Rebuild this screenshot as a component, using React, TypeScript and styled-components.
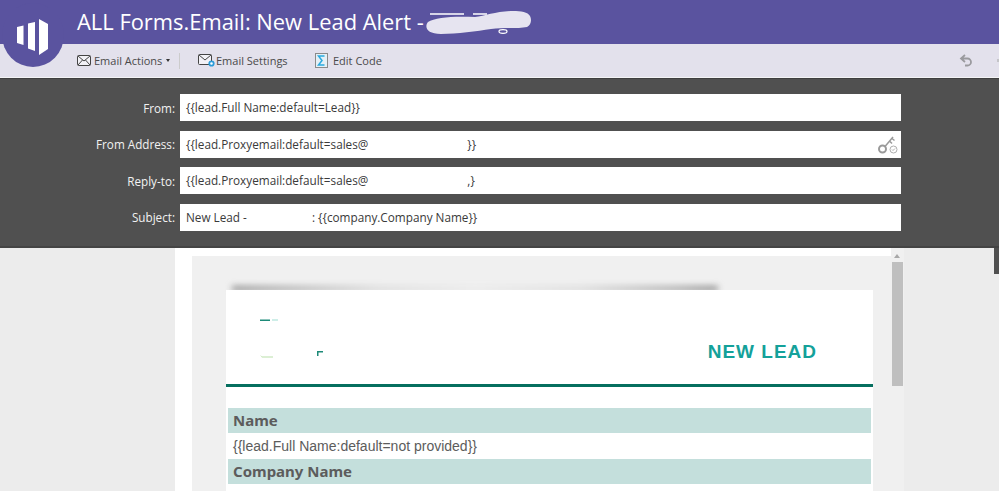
import React from "react";
import styled, { createGlobalStyle } from "styled-components";

const Global = createGlobalStyle`
  html, body { margin: 0; padding: 0; height: 100%; overflow: hidden; background: #ececec; }
  #root { height: 100%; }
  * { box-sizing: border-box; }
`;

const Page = styled.div`
  width: 999px; height: 491px; position: relative; overflow: hidden;
  font-family: "Open Sans", "Liberation Sans", sans-serif;
  display: flex; flex-direction: column;
`;
const TitleBar = styled.header`
  height: 44px; background: #5a539f; padding-left: 77px;
  display: flex; align-items: center; flex-shrink: 0; position: relative;
`;
const Title = styled.h1`
  margin: 0; font-size: 21.9px; line-height: 44px; font-weight: 400; color: #fff; white-space: pre;
`;
const Blob = styled.svg`
  position: absolute; left: 425px; top: 8px;
`;
const LogoBadge = styled.svg`
  position: absolute; left: 2px; top: 3px; z-index: 2;
`;
const Toolbar = styled.nav`
  height: 34px; background: #e3e1ec; border-bottom: 1px solid #f4f4f6; padding-left: 77px;
  display: flex; align-items: center; flex-shrink: 0; position: relative;
`;
const ToolItem = styled.div<{ $w: number }>`
  display: flex; align-items: center; width: ${p => p.$w}px; font-size: 11px; color: #4a4a4a; white-space: nowrap;
`;
const ToolLabel = styled.span<{ $ml: number }>`
  margin-left: ${p => p.$ml}px;
`;
const Caret = styled.span`
  width: 0; height: 0; border-left: 2.5px solid transparent; border-right: 2.5px solid transparent; border-top: 3px solid #333; margin-left: 4px;
`;
const Sep = styled.span`
  width: 1px; height: 16px; background: #ccc; margin-right: 18px;
`;
const Undo = styled.svg`
  position: absolute; left: 959px; top: 10px;
`;
const RedoStub = styled.span`
  position: absolute; right: 0; top: 15px; width: 2px; height: 3px; background: #c4c4c8;
`;
const Panel = styled.section`
  height: 170px; background: #505050; border-top: 1px solid #3f3f3f; border-bottom: 2px solid #444;
  padding-top: 15px; display: flex; flex-direction: column; gap: 9.67px; flex-shrink: 0;
`;
const Row = styled.div`
  display: flex; align-items: center; height: 27px;
`;
const Label = styled.label`
  width: 175px; text-align: right; font-size: 11.7px; color: #f2f2f2; white-space: nowrap;
`;
const Field = styled.div`
  margin-left: 5px; width: 721px; height: 27px; background: #fff; padding-left: 6px;
  font-size: 11.75px; line-height: 27px; color: #3a3a3a; white-space: pre; position: relative;
`;
const Gap = styled.span<{ $w: number }>`
  display: inline-block; width: ${p => p.$w}px;
`;
const KeyIcon = styled.svg`
  position: absolute; right: 2px; top: 3px;
`;
const Content = styled.main`
  flex: 1; display: flex; position: relative; min-height: 0;
`;
const Side = styled.div`
  width: 175px; background: #ececec; flex-shrink: 0;
`;
const Sheet = styled.div`
  width: 716px; background: #fff; padding: 8px 0 0 17px; flex-shrink: 0;
`;
const Canvas = styled.div`
  height: 100%; background: #f0f0f0; padding: 34px 0 0 34px; position: relative;
`;
const Smear = styled.div`
  position: absolute; left: 40px; top: 30px; width: 486px; height: 5px;
  background: linear-gradient(90deg, #8e8e8e 0%, #a0a0a0 6%, #dcdcdc 30%, #ececec 50%, #dcdcdc 72%, #a6a6a6 92%, #8e8e8e 98%);
  filter: blur(3px);
`;
const EmailCard = styled.div`
  width: 647px; height: 210px; background: #fff; position: relative;
`;
const Brand = styled.div`
  height: 97px; display: flex; justify-content: flex-end; padding: 54px 56px 0 0; position: relative;
  border-bottom: 3px solid #066f5f;
`;
const Marks = styled.svg`
  position: absolute; left: 33px; top: 28px;
`;
const NewLead = styled.div`
  font-family: "Liberation Sans", Arial, sans-serif; font-weight: 700; font-size: 19px; line-height: 16px;
  letter-spacing: 1px; color: #14a19a;
`;
const Table = styled.div`
  margin: 21px 2px 0;
  color: #5c5c5c;
`;
const Head = styled.div`
  height: 25px; background: #c4dfdc; padding-left: 5px; font-family: "Noto Sans", "DejaVu Sans", sans-serif; font-size: 15px; line-height: 25px; font-weight: 700;
`;
const Val = styled.div`
  height: 26px; padding-left: 5px; font-family: "Liberation Sans", Arial, sans-serif; font-size: 14px; line-height: 26px;
`;
const Scrollbar = styled.div`
  width: 13px; background: #f0f0f0; flex-shrink: 0; display: flex; flex-direction: column; align-items: center; padding: 6px 1px 0 0;
`;
const Arrow = styled.span`
  width: 0; height: 0; border-left: 3px solid transparent; border-right: 3px solid transparent; border-bottom: 4px solid #a8a8a8;
`;
const Thumb = styled.div`
  width: 11px; height: 124px; background: #bfbfbf; margin-top: 4px;
`;
const EdgeBar = styled.div`
  position: absolute; right: 0; top: 0; width: 5px; height: 26px; background: #505050;
`;

export default function App() {
  return (
    <Page>
      <Global />
      <TitleBar>
        <LogoBadge width="62" height="64" viewBox="2 3 62 64">
          <ellipse cx="33" cy="35" rx="31" ry="32" fill="#5a539f" />
          <path d="M17 27l6.500-1.500V45L17 43zM28 23.500 35 22v29l-7-2.500zM39 19l9 5v25l-9 6z" fill="#fff" />
        </LogoBadge>
        <Title>ALL Forms.Email: New Lead Alert - </Title>
        <Blob width="110" height="28" viewBox="0 0 110 28">
          <path d="M5 6h34M48 6h14" stroke="#fff" strokeWidth="1.500" fill="none" />
          <path d="M3 14C10 9 30 8 50 9c10-1 22-6 38-6 8 0 15 1 17 5 2 4 1 9-3 11-10 2-24 0-36 2-14 2-34 5-50 5C2 26-1 19 3 14z" fill="#e6e4f0" />
          <ellipse cx="78" cy="23.500" rx="4" ry="1.800" fill="none" stroke="#fff" strokeWidth="1.200" />
        </Blob>
      </TitleBar>
      <Toolbar>
        <ToolItem $w={102}>
          <svg width="14" height="11" viewBox="0 0 14 11" fill="#f2f1f6" stroke="#444" strokeWidth="1"><rect x=".5" y=".5" width="13" height="10" rx="1" /><path d="M1 1l6 5 6-5M1 10l4.500-5M13 10 8.500 5" fill="none" /></svg>
          <ToolLabel $ml={3}>Email Actions</ToolLabel><Caret />
        </ToolItem>
        <Sep />
        <ToolItem $w={117}>
          <svg width="17" height="13" viewBox="0 0 17 13" fill="#f2f1f6" stroke="#444" strokeWidth="1"><rect x=".5" y=".5" width="13" height="10" rx="1" /><path d="M1 1l6 5 6-5" fill="none" /><circle cx="13.500" cy="9.500" r="2.200" stroke="#2a9bd8" strokeWidth="1.800" fill="#fff" /></svg>
          <ToolLabel $ml={1}>Email Settings</ToolLabel>
        </ToolItem>
        <ToolItem $w={100}>
          <svg width="13" height="15" viewBox="0 0 13 15"><rect x=".5" y=".5" width="12" height="14" fill="#e4f0f6" stroke="#8a8a8a" /><path d="M9.500 3H3.500L7 7.500 3.500 12H9.500" fill="none" stroke="#29a9df" strokeWidth="1.500" /></svg>
          <ToolLabel $ml={5}>Edit Code</ToolLabel>
        </ToolItem>
        <Undo width="14" height="13" viewBox="0 0 14 13" fill="none" stroke="#9a9a9e" strokeWidth="1.800"><path d="M6 1 2 4.500 6 8M2 4.500h6.500a3.500 3.500 0 0 1 0 7H6" /></Undo>
        <RedoStub />
      </Toolbar>
      <Panel>
        <Row><Label>From:</Label><Field>{"{{lead.Full Name:default=Lead}}"}</Field></Row>
        <Row>
          <Label>From Address:</Label>
          <Field>
            {"{{lead.Proxyemail:default=sales@"}<Gap $w={99} />{"}}"}
            <KeyIcon width="22" height="21" viewBox="0 0 22 21" fill="none" stroke="#9a9a9a">
              <circle cx="5.500" cy="15" r="3.500" strokeWidth="2" /><path d="M8 12.500 16 3M12.500 7l2.500 2.500M15 4.500l2.500 2" strokeWidth="1.500" /><circle cx="16.500" cy="15.500" r="3.500" strokeWidth=".8" /><path d="m15 15.500 1 1 2-2" strokeWidth=".8" />
            </KeyIcon>
          </Field>
        </Row>
        <Row><Label>Reply-to:</Label><Field>{"{{lead.Proxyemail:default=sales@"}<Gap $w={99} />{",}"}</Field></Row>
        <Row><Label>Subject:</Label><Field>{"New Lead - "}<Gap $w={62} />{": {{company.Company Name}}"}</Field></Row>
      </Panel>
      <Content>
        <Side />
        <Sheet>
          <Canvas>
            <Smear />
            <EmailCard>
              <Brand>
                <Marks width="70" height="44" viewBox="0 0 70 44">
                  <path d="M1 1.500h10v1.500H1z" fill="#1d8a78" /><path d="M13 1.500h6v1h-6z" fill="#9ddcd0" />
                  <path d="M1 37l2 1.500H14v1H3z" fill="#b9dfa9" /><path d="M58 33h6v1.500h-4.500V38H58z" fill="#1d8a78" />
                </Marks>
                <NewLead>NEW LEAD</NewLead>
              </Brand>
              <Table>
                <Head>Name</Head>
                <Val>{"{{lead.Full Name:default=not provided}}"}</Val>
                <Head>Company Name</Head>
              </Table>
            </EmailCard>
          </Canvas>
        </Sheet>
        <Scrollbar>
          <Arrow />
          <Thumb />
        </Scrollbar>
        <EdgeBar />
      </Content>
    </Page>
  );
}
